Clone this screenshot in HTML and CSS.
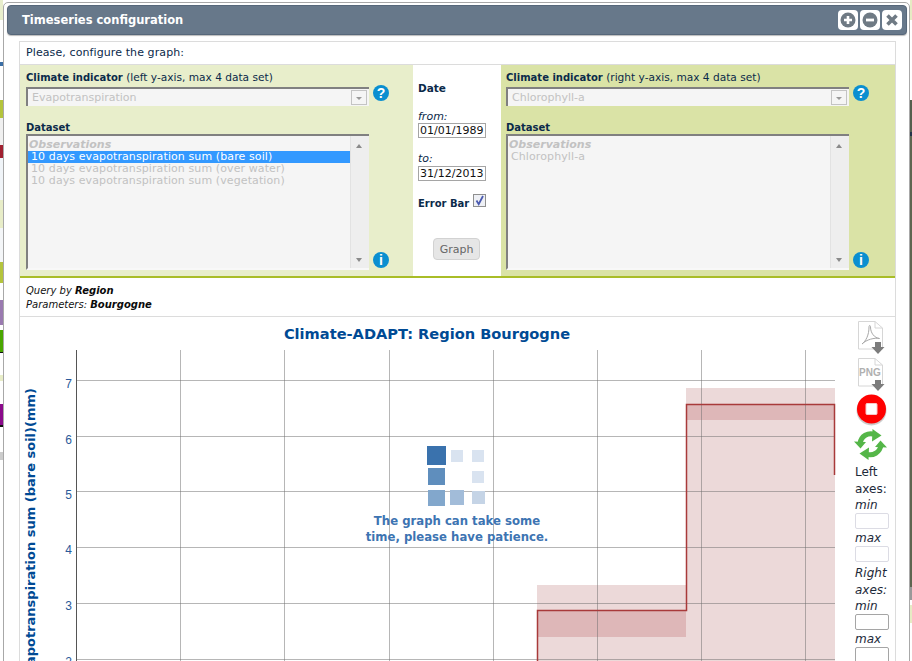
FILE: index.html
```html
<!DOCTYPE html>
<html lang="en">
<head>
    <meta charset="UTF-8">
    <title>Timeseries configuration</title>
    <link rel="stylesheet" href="styles.css">
</head>
<body>
    <div class="strip-left"></div>
    <div class="window">
        <header class="titlebar">
            <h1>Timeseries configuration</h1>
            <div class="win-btns">
                <span class="win-btn"><svg width="16" height="16" viewBox="0 0 16 16"><circle cx="8" cy="8" r="7.5" fill="#6f7a84"/><path d="M8 4v8M4 8h8" stroke="#fff" stroke-width="2.6"/></svg></span>
                <span class="win-btn"><svg width="16" height="16" viewBox="0 0 16 16"><circle cx="8" cy="8" r="7.5" fill="#6f7a84"/><path d="M4 8h8" stroke="#fff" stroke-width="2.8"/></svg></span>
                <span class="win-btn"><svg width="16" height="16" viewBox="0 0 16 16"><path d="M3.500 3.500l9 9M12.500 3.500l-9 9" stroke="#6f7a84" stroke-width="3.600"/></svg></span>
            </div>
        </header>

        <div class="panel">
            <p class="intro">Please, configure the graph:</p>

            <div class="config">
                <section class="col col-left">
                    <p class="lbl"><b>Climate indicator</b> (left y-axis, max 4 data set)</p>
                    <div class="field-row">
                        <div class="select">
                            <span>Evapotranspiration</span>
                            <span class="select-arrow"></span>
                        </div>
                        <span class="badge badge-help">?</span>
                    </div>
                    <p class="lbl lbl-dataset"><b>Dataset</b></p>
                    <div class="field-row field-row-end">
                        <div class="listbox">
                            <div class="options">
                                <div class="optgroup">Observations</div>
                                <div class="option selected">10 days evapotranspiration sum (bare soil)</div>
                                <div class="option">10 days evapotranspiration sum (over water)</div>
                                <div class="option">10 days evapotranspiration sum (vegetation)</div>
                            </div>
                            <div class="scrollbar"><i class="up"></i><i class="down"></i></div>
                        </div>
                        <span class="badge badge-info">i</span>
                    </div>
                </section>

                <section class="col-date">
                    <p class="date-title">Date</p>
                    <label class="date-lbl">from:</label>
                    <input class="date-input" type="text" value="01/01/1989">
                    <label class="date-lbl date-lbl-to">to:</label>
                    <input class="date-input" type="text" value="31/12/2013">
                    <div class="errorbar">
                        <b>Error Bar</b>
                        <span class="check"><svg width="11" height="11" viewBox="0 0 11 11"><path d="M2.500 5.500l2.200 3.600L9 1" fill="none" stroke="#4a5ab0" stroke-width="1.800"/></svg></span>
                    </div>
                    <button class="graph-btn" type="button">Graph</button>
                </section>

                <section class="col col-right">
                    <p class="lbl"><b>Climate indicator</b> (right y-axis, max 4 data set)</p>
                    <div class="field-row">
                        <div class="select">
                            <span>Chlorophyll-a</span>
                            <span class="select-arrow"></span>
                        </div>
                        <span class="badge badge-help">?</span>
                    </div>
                    <p class="lbl lbl-dataset"><b>Dataset</b></p>
                    <div class="field-row field-row-end">
                        <div class="listbox">
                            <div class="options">
                                <div class="optgroup">Observations</div>
                                <div class="option">Chlorophyll-a</div>
                            </div>
                            <div class="scrollbar"><i class="up"></i><i class="down"></i></div>
                        </div>
                        <span class="badge badge-info">i</span>
                    </div>
                </section>
            </div>

            <div class="query">
                <p>Query by <b>Region</b></p>
                <p>Parameters: <b>Bourgogne</b></p>
            </div>

            <div class="chart-row">
                <div class="plot">
                    <h2 class="plot-title">Climate-ADAPT: Region Bourgogne</h2>
                    <svg class="plot-svg" width="830" height="320" viewBox="0 0 830 320">
                        <!-- error bands -->
                        <rect x="517" y="235" width="149" height="85" fill="#ecd9d9"/>
                        <rect x="517" y="261" width="149" height="26" fill="#deb7b8"/>
                        <rect x="666" y="38" width="149" height="282" fill="#ecd9d9"/>
                        <rect x="666" y="54" width="149" height="16" fill="#deb7b8"/>
                        <!-- grid -->
                        <g stroke="#6e6e6e" stroke-opacity=".5">
                            <path d="M56 30.500H815M56 86.500H815M56 141.500H815M56 197.500H815M56 253.500H815M56 309.500H815"/>
                            <path d="M160.500 0V320M264.500 0V320M369.500 0V320M473.500 0V320M577.500 0V320M681.500 0V320M785.500 0V320"/>
                        </g>
                        <path d="M56.500 0V320" stroke="#555"/>
                        <!-- series -->
                        <path d="M517.500 320V260.500H666.500V54.500H814.500V125" fill="none" stroke="#a83a3a" stroke-width="1.500"/>
                        <g class="tick">
                            <text x="52" y="38">7</text>
                            <text x="52" y="94">6</text>
                            <text x="52" y="149">5</text>
                            <text x="52" y="204">4</text>
                            <text x="52" y="260">3</text>
                            <text x="52" y="316">2</text>
                        </g>
                        <text class="axis-title" transform="translate(15 38) rotate(-90)" text-anchor="end">Evapotranspiration sum (bare soil)(mm)</text>
                    </svg>
                    <div class="loading">
                        <div class="spinner">
                            <i class="sq sq1"></i><i class="sq sq2"></i><i class="sq sq3"></i>
                            <i class="sq sq4"></i><i class="sq sq5"></i><i class="sq sq6"></i>
                            <i class="sq sq7"></i><i class="sq sq8"></i><i class="sq sq9"></i>
                        </div>
                        <p>The graph can take some<br>time, please have patience.</p>
                    </div>
                </div>

                <aside class="tools">
                    <svg class="tool tool-pdf" width="30" height="33" viewBox="0 0 30 33">
                        <path d="M3.500.5H20L27.500 7V28H3.500Z" fill="#fff" stroke="#d6d6d6"/>
                        <path d="M20 .5V7H27.500" fill="none" stroke="#d6d6d6"/>
                        <path d="M7 23C11 20 14 14 14 6c0-2 1.500-2 1.500 0 0 6 4 11 9 11.500-5-1-13 1-17.500 5.500Z" fill="none" stroke="#a8a8a8" stroke-width="1"/>
                        <path d="M20 21h6v5h3.500L23 33l-6.500-7H20Z" fill="#7c7c7c"/>
                    </svg>
                    <svg class="tool" width="30" height="33" viewBox="0 0 30 33">
                        <path d="M3.500.5H20L27.500 7V28H3.500Z" fill="#fff" stroke="#d6d6d6"/>
                        <path d="M20 .5V7H27.500" fill="none" stroke="#d6d6d6"/>
                        <text class="png-text" x="4" y="18">PNG</text>
                        <path d="M20 22h6v4h3.500L23 33l-6.500-7H20Z" fill="#7c7c7c"/>
                    </svg>
                    <svg class="tool tool-stop" width="31" height="32" viewBox="0 0 31 32">
                        <circle cx="15.500" cy="16.500" r="15" fill="#999" opacity=".5"/>
                        <circle cx="15.500" cy="15" r="14.500" fill="#f00"/>
                        <rect x="10" y="9.500" width="11" height="11" rx="1" fill="#fff" stroke="#f8c8c8"/>
                    </svg>
                    <svg class="tool tool-refresh" width="33" height="31" viewBox="0 0 33 31">
                        <path d="M6 14.500C7 7 14 3 21 5.500" fill="none" stroke="#54b648" stroke-width="5"/>
                        <path d="M18.500 0l9 6.500-9.500 6Z" fill="#54b648"/>
                        <path d="M27 16c-1 7.500-8 11.500-15 9" fill="none" stroke="#54b648" stroke-width="5"/>
                        <path d="M14.500 31l-9-6.500 9.500-6Z" fill="#54b648"/>
                        <path d="M0 12.500l12 .5-5.500 6.500ZM33 18.500l-12-.5 5.500-6.500Z" fill="#54b648"/>
                    </svg>
                    <p class="axes-title">Left axes:</p>
                    <label class="axes-lbl">min</label>
                    <input class="axes-input axes-input-off" type="text">
                    <label class="axes-lbl">max</label>
                    <input class="axes-input axes-input-off" type="text">
                    <p class="axes-lbl axes-right">Right axes:</p>
                    <label class="axes-lbl">min</label>
                    <input class="axes-input" type="text">
                    <label class="axes-lbl">max</label>
                    <input class="axes-input" type="text">
                </aside>
            </div>
        </div>
    </div>
    <div class="strip-right"></div>
</body>
</html>
```

FILE: styles.css
```css
:root {
    --navy: #0b2a4a;
    --grey-text: #c2c2c2;
    --chart-blue: #004a94;
    --badge-blue: #0a8fd0;
}

* {
    box-sizing: border-box;
}

html, body {
    height: 100%;
}

body {
    margin: 0;
    display: flex;
    overflow: hidden;
    background-color: #fff;
    font-family: "DejaVu Sans", Verdana, sans-serif;
    font-size: 11px;
    color: var(--navy);
}

p, h1, h2 {
    margin: 0;
}

b {
    font-size: 10px;
}

/* bits of the page behind the dialog */
.strip-left {
    flex: 0 0 3px;
    background: linear-gradient(to bottom,
        #e8eecc 0 20px, #fff 20px 62px, #3a6ea5 62px 66px, #fff 66px 100px,
        #b4c43c 100px 118px, #f0f0f0 118px 145px, #a02030 145px 158px, #f0f4f8 158px 200px,
        #e8edc8 200px 228px, #f4f6f8 228px 262px, #b4c43c 262px 283px, #fff 283px 300px,
        #9a7ab0 300px 325px, #fff 325px 330px, #4aa600 330px 352px, #111 352px 353px,
        #fff 353px 375px, #e8edc8 375px 381px, #fff 381px 404px, #8a0a8a 404px 425px,
        #111 425px 427px, #fff 427px 452px, #ccc 452px 460px, #fff 460px);
}

.strip-right {
    flex: 0 0 2px;
    background: linear-gradient(to bottom,
        #e6ebc4 0 20px, #fff 20px 100px, #55604e 100px 132px, #24344a 132px 136px,
        #5e6650 136px 587px, #999 587px 600px, #fff 600px 605px, #e6ebc4 605px 623px, #fff 623px);
}

.window {
    flex: 0 0 907px;
    height: 700px;
    margin-top: 2px;
    padding: 2px;
    padding-left: 3px;
    background-color: #fff;
    border: 1px solid #a8a8a8;
    border-radius: 5px 5px 0 0;
}

.titlebar {
    display: flex;
    align-items: center;
    justify-content: space-between;
    height: 30px;
    padding: 0 4px 0 14px;
    background-color: #67788a;
    border: 1px solid #56677a;
    border-radius: 4px;
    box-shadow: 0 1px 1px #bbb;
}

.titlebar h1 {
    font-size: 11.500px;
    font-weight: bold;
    color: #fff;
}

.win-btns {
    display: flex;
    gap: 2px;
}

.win-btn {
    display: flex;
    align-items: center;
    justify-content: center;
    width: 20px;
    height: 20px;
    background-color: #fff;
    border-radius: 4px;
}

.panel {
    width: 877px;
    margin: 6px 0 0 12px;
    border: 1px solid #dcdcdc;
}

.intro {
    height: 23px;
    padding: 3px 6px;
    line-height: 16px;
    letter-spacing: .1px;
    border-bottom: 1px solid #dcdcdc;
}

.config {
    display: flex;
    height: 213px;
    border-bottom: 2px solid #a9bd27;
}

.col {
    flex: 0 0 394px;
    padding: 5px 0 0 6px;
}

.col-left {
    flex-basis: 393px;
    background-color: #e8eecb;
}

.col-right {
    padding-left: 5px;
    background-color: #dae3a6;
}

.lbl {
    height: 14px;
    font-size: 10.600px;
    line-height: 14px;
}

.lbl b {
    font-size: 10px;
}

.lbl-dataset {
    margin-top: 14px;
}

.field-row {
    display: flex;
    gap: 4px;
    margin-top: 3px;
}

.field-row-end {
    align-items: flex-end;
    margin-top: 0;
}

.select {
    display: flex;
    align-items: center;
    justify-content: space-between;
    width: 343px;
    height: 19px;
    padding-left: 4px;
    background-color: #f5f5f5;
    border-top: 2px solid #808080;
    border-left: 2px solid #808080;
    color: var(--grey-text);
}

.select-arrow {
    position: relative;
    width: 16px;
    height: 15px;
    margin-right: 2px;
    background-color: #f5f5f5;
    border: 1px solid #c4c4c4;
}

.select-arrow::after {
    content: "";
    position: absolute;
    left: 4px;
    top: 6px;
    border: 3px solid transparent;
    border-width: 3px 3px 0;
    border-top-color: #9a9a9a;
}

.badge {
    display: block;
    width: 16px;
    height: 16px;
    border-radius: 50%;
    background-color: var(--badge-blue);
    color: #fff;
    font-family: "Liberation Sans", sans-serif;
    font-size: 14px;
    font-weight: bold;
    line-height: 16px;
    text-align: center;
}

.badge-help {
    margin-top: -2px;
}

.badge-info {
    margin-bottom: 2px;
}

.listbox {
    display: flex;
    width: 343px;
    height: 136px;
    background-color: #f5f5f5;
    border-top: 2px solid #808080;
    border-left: 2px solid #808080;
    border-bottom: 2px solid #f8f8f8;
    color: var(--grey-text);
}

.options {
    flex: 1;
    padding-top: 3px;
}

.optgroup {
    height: 12px;
    padding-left: 1px;
    font-weight: bold;
    font-style: italic;
    line-height: 12px;
}

.option {
    height: 12px;
    padding-left: 3px;
    line-height: 12px;
    letter-spacing: .1px;
}

.option.selected {
    background-color: #3399ff;
    color: #fff;
}

.scrollbar {
    position: relative;
    flex: 0 0 19px;
    background-color: #eee;
    border-left: 1px solid #e2e2e2;
}

.scrollbar i {
    position: absolute;
    left: 5px;
    border: 3px solid transparent;
}

.scrollbar .up {
    top: 8px;
    border-width: 0 3px 4px;
    border-bottom-color: #8a8a8a;
}

.scrollbar .down {
    bottom: 6px;
    border-width: 4px 3px 0;
    border-top-color: #8a8a8a;
}

.col-date {
    flex: 0 0 88px;
    padding: 16px 0 0 5px;
    background-color: #fff;
}

.date-title {
    font-weight: bold;
    font-size: 10.500px;
    line-height: 14px;
}

.date-lbl {
    display: block;
    margin-top: 14px;
    font-style: italic;
    line-height: 13px;
}

.col-date .date-title + .date-lbl {
    margin-top: 15px;
}

.date-lbl-to {
    line-height: 14px;
}

.date-input {
    display: block;
    width: 68px;
    height: 15px;
    padding: 0 1px;
    border: 1px solid #a5a5a5;
    font-family: inherit;
    font-size: 11px;
    color: #111;
    outline: none;
}

.errorbar {
    display: flex;
    align-items: center;
    gap: 4px;
    margin-top: 15px;
    height: 14px;
}

.check {
    display: flex;
    align-items: center;
    justify-content: center;
    width: 13px;
    height: 13px;
    margin-top: -5px;
    background-color: #eef0f5;
    border: 1px solid #8f8f8f;
}

.graph-btn {
    display: block;
    width: 47px;
    height: 22px;
    margin: 28px 0 0 15px;
    padding: 0;
    background-color: #e6e6e6;
    border: 1px solid #d2d2d2;
    border-radius: 4px;
    font-family: inherit;
    font-size: 11px;
    color: #666;
}

.query {
    height: 39px;
    padding: 6px 6px 0;
    font-size: 10px;
    font-style: italic;
    line-height: 14px;
    color: #111;
    border-bottom: 1px solid #dcdcdc;
}

.query b {
    color: #0a0a0a;
}

.chart-row {
    display: flex;
}

.plot {
    position: relative;
    flex: 0 0 830px;
}

.plot-title {
    height: 33px;
    padding-right: 16px;
    font-size: 14.600px;
    font-weight: bold;
    line-height: 33px;
    text-align: center;
    color: var(--chart-blue);
}

.plot-svg {
    display: block;
}

.tick text {
    font-family: "Liberation Sans", sans-serif;
    font-size: 12px;
    fill: #2a5a9a;
    text-anchor: end;
}

.axis-title {
    font-family: "DejaVu Sans", sans-serif;
    font-size: 13px;
    font-weight: bold;
    fill: var(--chart-blue);
}

.png-text {
    font-family: "Liberation Sans", sans-serif;
    font-size: 10px;
    font-weight: bold;
    fill: #b0b0b0;
}

/* sits over the chart while the data loads */
.loading {
    position: absolute;
    left: 317px;
    top: 128px;
    width: 240px;
    text-align: center;
    color: #3d74b2;
    font-size: 11.700px;
    font-weight: bold;
}

.loading p {
    margin-top: 5px;
    line-height: 16px;
}

.spinner {
    display: grid;
    grid-template-columns: repeat(3, 21px);
    grid-auto-rows: 21px;
    justify-content: center;
    place-items: center;
}

.sq {
    display: block;
    width: 12px;
    height: 12px;
    background-color: #d9e3f0;
}

.sq1 { width: 19px; height: 19px; background-color: #3a72ad; }
.sq4 { width: 17px; height: 17px; background-color: #5f8ebd; }
.sq5 { visibility: hidden; }
.sq7 { width: 17px; height: 16px; background-color: #82a7cc; }
.sq8 { width: 14px; height: 15px; background-color: #a2bcd9; }
.sq9 { width: 13px; height: 13px; background-color: #c5d4e6; }

.tools {
    flex: 0 0 36px;
    margin-left: 5px;
    padding-top: 4px;
    font-size: 12px;
    line-height: 17px;
    color: #1d2a3a;
}

.tool {
    display: block;
    margin: 0 0 3px 0;
}

.tool-pdf {
    margin-bottom: 4px;
}

.tool-stop {
    margin-left: 1px;
}

.tool-refresh {
    margin: 3px 0 4px -1px;
}

.axes-title {
    margin-top: 4px;
    width: 34px;
}

.axes-lbl {
    display: block;
    width: 34px;
    font-style: italic;
    line-height: 15px;
}

.axes-right {
    margin-top: 3px;
    line-height: 17px;
}

.axes-input {
    display: block;
    width: 34px;
    height: 16px;
    margin: 0 0 2px;
    padding: 0;
    border: 1px solid #a5a5a5;
    border-radius: 2px;
    outline: none;
}

.axes-input-off {
    border-color: #dcdce4;
}
```
